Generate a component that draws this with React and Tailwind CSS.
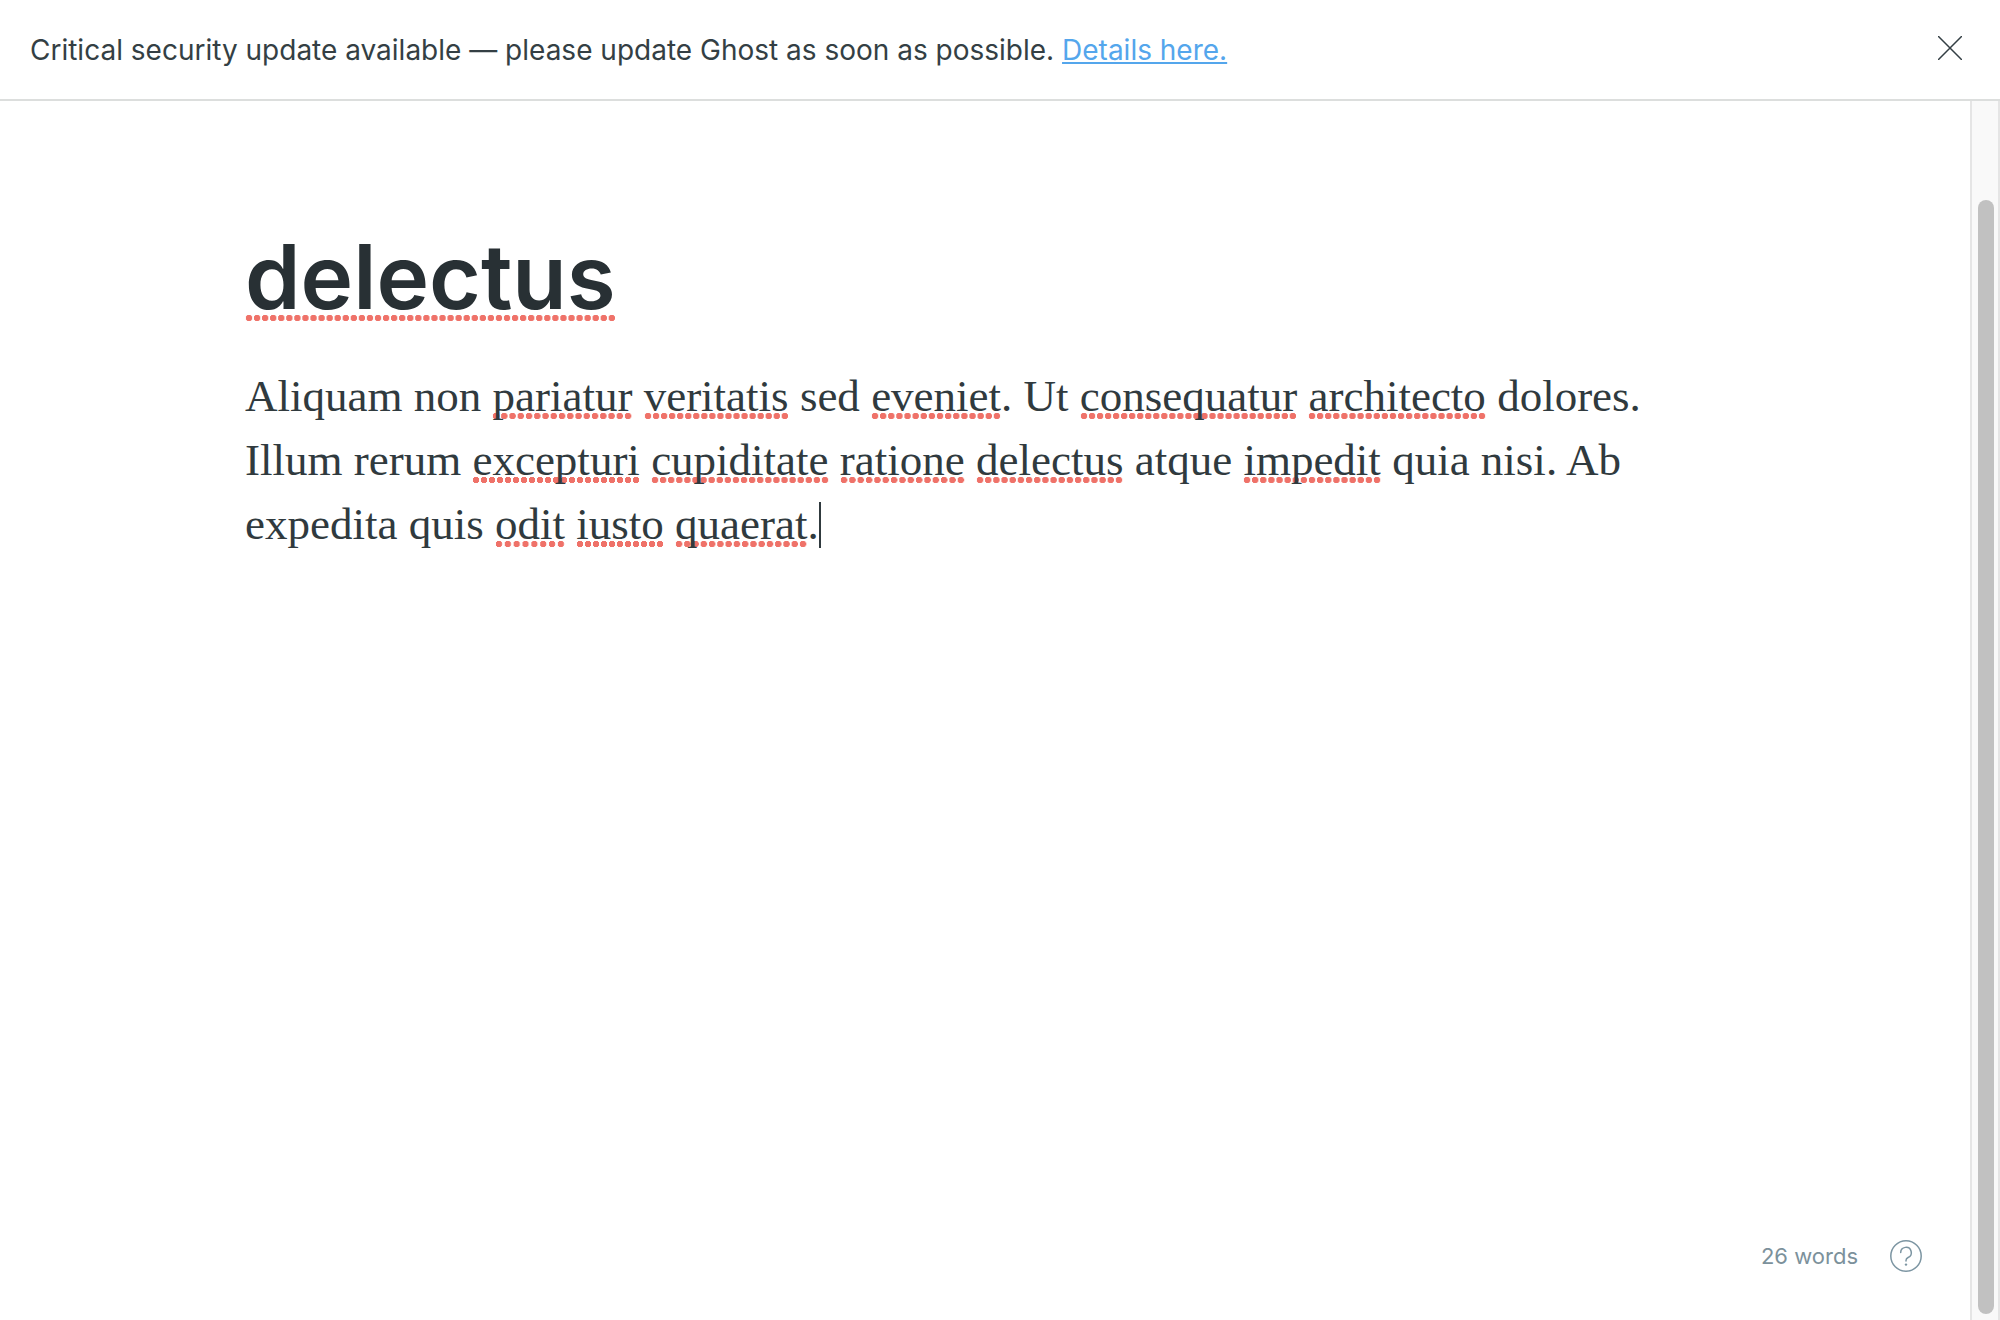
import { Fragment } from "react";

const LINES = [
  "Aliquam non *pariatur *veritatis sed *eveniet . Ut *consequatur *architecto dolores.",
  "Illum rerum *excepturi *cupiditate *ratione *delectus atque *impedit quia nisi. Ab",
  "expedita quis *odit *iusto *quaerat .",
];

function Flagged({ children }) {
  return (
    <span className="bg-[radial-gradient(circle,#ef7269_3px,transparent_3.5px)] bg-[length:8px_6px] bg-[position:0_calc(100%-2px)] [background-repeat:space_no-repeat]">
      {children}
    </span>
  );
}

function Line({ text }) {
  return text.split(" ").map((word, i) => (
    <Fragment key={i}>
      {i > 0 && word !== "." ? " " : ""}
      {word.startsWith("*") ? <Flagged>{word.slice(1)}</Flagged> : word}
    </Fragment>
  ));
}

function Banner() {
  return (
    <header className="flex h-[101px] shrink-0 items-center justify-between border-b-2 border-[#dcdedd] pr-[38px] pl-[30px]">
      <p className="text-[28px] leading-10 text-[#343f44]">
        Critical security update available — please update Ghost as soon as possible.{" "}
        <a
          href="#details"
          className="text-[#54a6ec] underline decoration-2 underline-offset-2 [text-decoration-skip-ink:none]"
        >
          Details here.
        </a>
      </p>
      <button type="button" aria-label="Close" className="mt-9 self-start text-[#343f44]">
        <svg viewBox="0 0 24 24" className="size-6" fill="none" stroke="currentColor" strokeWidth="1.5">
          <path d="M0.5 0.5 23.5 23.5M23.5 0.5 0.5 23.5" strokeLinecap="round" />
        </svg>
      </button>
    </header>
  );
}

function Scrollbar() {
  return (
    <div className="w-[30px] shrink-0 border-x-2 border-[#e5e5e5] bg-[#f9f9f9] px-1 pt-[99px] pb-1.5">
      <div className="ml-0.5 h-full w-4 rounded-full bg-[#c1c1c1]" />
    </div>
  );
}

export default function App() {
  return (
    <div className="flex h-screen flex-col bg-white font-['Inter',sans-serif]">
      <Banner />
      <div className="flex min-h-0 flex-1">
        <main className="flex min-w-0 flex-1 flex-col justify-between">
          <div className="mx-auto w-full max-w-[1480px] pt-32">
            <input
              aria-label="Post title"
              defaultValue="delectus"
              spellCheck={false}
              className="block h-24 field-sizing-content bg-[radial-gradient(circle,#ef7269_3px,transparent_3.5px)] bg-[length:8px_6px] bg-[position:0_calc(100%-4px)] [background-repeat:space_no-repeat] text-[89px] leading-24 font-semibold text-[#283034] outline-none"
            />
            <div
              role="textbox"
              aria-label="Post content"
              aria-multiline="true"
              contentEditable
              suppressContentEditableWarning
              spellCheck={false}
              className="mt-[39px] font-['Liberation_Serif',serif] text-[45px] leading-16 text-[#303a3e] outline-none"
            >
              {LINES.map((text, i) => (
                <Fragment key={i}>
                  {i > 0 && <br />}
                  <Line text={text} />
                </Fragment>
              ))}
              <span className="inline-block h-[46px] w-0.5 bg-[#303a3e] align-[-9px]" />
            </div>
          </div>
          <footer className="flex items-center justify-end gap-8 pr-12 pb-12">
            <span className="text-[22px] leading-8 text-[#7c919b]">26 words</span>
            <button type="button" aria-label="Help" className="text-[#7c95a2]">
              <svg viewBox="0 0 32 32" className="size-8" fill="none" stroke="currentColor" strokeWidth="1.5" strokeLinecap="round">
                <circle cx="16" cy="16" r="15.2" />
                <path d="M10.7 12.6a5.3 5.3 0 1 1 7.4 4.9c-1.4.7-2.1 1.4-2.1 3v.6" />
                <circle cx="16" cy="24.6" r="1.2" fill="currentColor" stroke="none" />
              </svg>
            </button>
          </footer>
        </main>
        <Scrollbar />
      </div>
    </div>
  );
}
